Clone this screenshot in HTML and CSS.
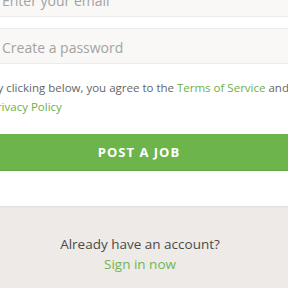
FILE: index.html
```html
<!DOCTYPE html>
<html>
<head>
<meta charset="utf-8">
<link rel="stylesheet" href="styles.css">
</head>
<body>
<div class="card">
  <div class="form">
    <div class="field">Enter your email</div>
    <div class="field">Create a password</div>
    <p class="terms">By clicking below, you agree to the <a class="link">Terms of Service</a> and <a class="link">Privacy Policy</a></p>
    <div class="btn">POST A JOB</div>
  </div>
</div>
<div class="footer">
  <div class="already">Already have an account?</div>
  <a class="link signin">Sign in now</a>
</div>
</body>
</html>
```
FILE: styles.css
```css
html, body {
  margin: 0;
  padding: 0;
  background: #edeae7;
  overflow: hidden;
}
body {
  font-family: "Open Sans", "Liberation Sans", sans-serif;
  width: 288px;
  height: 288px;
}
.card {
  background: #ffffff;
  margin-top: -19px;
  margin-left: -10px;
  width: 302px;
  padding-bottom: 35px;
  box-shadow: 0 1px 2px rgba(0,0,0,0.06);
}
.form {
  display: flex;
  flex-direction: column;
}
.field {
  box-sizing: border-box;
  height: 36px;
  background: #f9f8f6;
  border: 1px solid #ebebea;
  border-radius: 2px;
  padding-left: 11px;
  padding-top: 3px;
  display: flex;
  align-items: center;
  font-size: 14px;
  color: #a3a3a3;
  margin-bottom: 11px;
}
.terms {
  margin: 3px 0 0 0;
  font-size: 11.5px;
  line-height: 19px;
  color: #666666;
}
.link {
  color: #6eae4c;
  text-decoration: none;
}
.btn {
  margin-top: 18px;
  height: 36px;
  background: #6db54b;
  border-bottom: 1px solid #62a543;
  border-radius: 2px;
  color: #ffffff;
  font-weight: 700;
  font-size: 13px;
  display: flex;
  align-items: center;
  justify-content: center;
  letter-spacing: 1px;
  padding-right: 4px;
}
.footer {
  display: flex;
  flex-direction: column;
  align-items: center;
  padding-top: 28px;
  padding-right: 8px;
  font-size: 13.5px;
  line-height: 20px;
}
.already {
  color: #4a4a4a;
}
.signin {
  color: #72b556;
}
```
